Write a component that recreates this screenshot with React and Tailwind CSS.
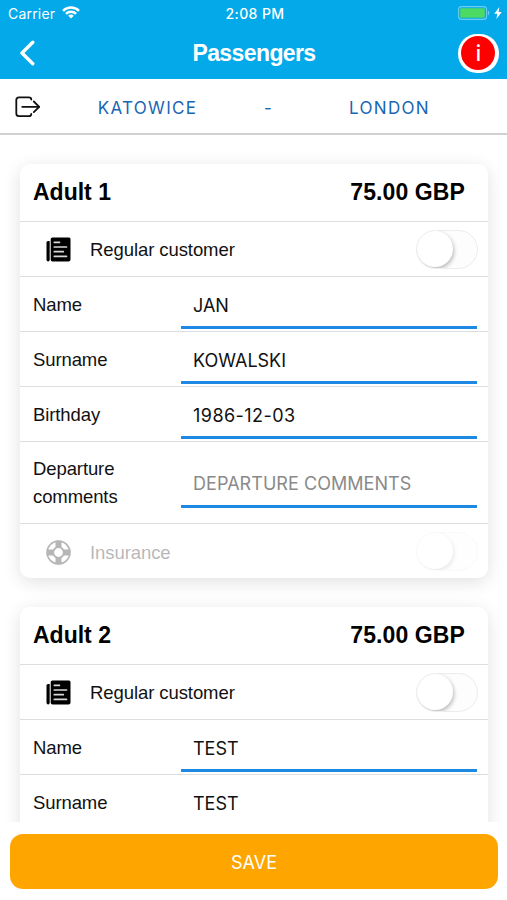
import React from "react";

const passengers = [
    {
        title: "Adult 1",
        price: "75.00 GBP",
        extras: true,
        fields: [
            { label: "Name", value: "JAN" },
            { label: "Surname", value: "KOWALSKI" },
            { label: "Birthday", value: "1986-12-03", date: true }
        ]
    },
    {
        title: "Adult 2",
        price: "75.00 GBP",
        extras: false,
        fields: [
            { label: "Name", value: "TEST" },
            { label: "Surname", value: "TEST" }
        ]
    }
];

const PaperIcon = () => (
    <svg className="w-[25px] h-[25px]" viewBox="0 0 25 25">
        <path d="M6.500 .5h16.500q1.500 0 1.500 1.500v20.500q0 2-2 2H6.500Q4.700 24.500 4.700 22.500V2Q4.700.5 6.500 .5z" fill="#000" />
        <path d="M3.700 4H2Q.5 4 .5 5.600V22.500q0 2 1.700 2 1.500 0 1.500-1.800z" fill="#000" />
        <path d="M8.300 5.300h5.200M8.300 10h12.200M8.300 14.700h9M8.300 19.400h12.200" stroke="#d8d8d8" strokeWidth="1.700" strokeLinecap="round" />
    </svg>
);

const BuoyIcon = () => (
    <svg className="w-[25px] h-[25px]" viewBox="0 0 25 25" fill="none" stroke="#111">
        <circle cx="12.5" cy="12.5" r="11.4" strokeWidth="1.6" />
        <circle cx="12.5" cy="12.5" r="5.3" strokeWidth="1.8" />
        <path d="M12.500 .7v7M12.500 17.300v7M.7 12.500h7M17.300 12.500h7" strokeWidth="6" />
    </svg>
);

const StatusBar = () => (
    <div className="h-[27px] pl-[8px] pr-[5px] grid grid-cols-3 items-center font-['Inter',sans-serif] text-[14px] leading-[27px]">
        <div className="flex items-center gap-[7px]">
            <span className="tracking-[0.2px]">Carrier</span>
            <svg className="w-[18px] h-[13px] -mt-[2px]" viewBox="0 0 18 13" fill="none" stroke="white" strokeWidth="2.4">
                <path d="M1 4.8a11.3 11.3 0 0 1 16 0" />
                <path d="M3.9 7.8a7.2 7.2 0 0 1 10.2 0" />
                <path d="M9 12.6 6.2 9.8a4 4 0 0 1 5.6 0z" fill="white" stroke="none" />
            </svg>
        </div>
        <div className="text-center font-medium text-[14px] whitespace-nowrap tracking-[0.4px]">2:08 PM</div>
        <div className="-mt-[2px] flex items-center justify-end gap-[4px]">
            <svg className="w-[32px] h-[14px]" viewBox="0 0 32 14">
                <rect x="0.6" y="0.6" width="28" height="12.8" rx="3" fill="none" stroke="#6fcdf2" strokeWidth="1.1" />
                <rect x="2.2" y="2.2" width="24.6" height="9.6" rx="1.4" fill="#4cd964" />
                <path d="M30 4.6v4.8c1.8-.8 1.8-4 0-4.8z" fill="#6fcdf2" />
            </svg>
            <svg className="w-[8px] h-[12px]" viewBox="0 0 8 12" fill="white">
                <path d="M5.4 0 .3 6.7h3L2.4 12 7.8 5H4.6z" />
            </svg>
        </div>
    </div>
);

const NavBar = () => (
    <div className="h-[52px] pl-[19px] pr-[8px] flex items-center justify-between">
        <svg className="w-[17px] h-[26px]" viewBox="0 0 17 26" fill="none" stroke="white" strokeWidth="3.4" strokeLinecap="round" strokeLinejoin="round">
            <path d="M13.800 2.300 3 13l10.800 10.700" />
        </svg>
        <div className="text-[23px] font-bold pl-[14px] tracking-[-0.6px]">Passengers</div>
        <div className="w-[41px] h-[39px] rounded-[19px] bg-white flex items-center justify-center">
            <div className="w-[34px] h-[34px] rounded-full bg-[#ff0000] flex items-center justify-center text-[21px] leading-none font-['Inter',sans-serif] font-medium">i</div>
        </div>
    </div>
);

const RouteBar = () => (
    <div className="h-[56px] shrink-0 border-b-2 border-[#d0d0d0] bg-white flex items-center text-[17px] text-[#1a66b3] font-['Inter',sans-serif]">
        <svg className="w-[26px] h-[22px] mt-[2px] ml-[15px] shrink-0" viewBox="0 0 26 22" fill="none" stroke="#111" strokeWidth="1.8" strokeLinecap="round" strokeLinejoin="round">
            <path d="M16.300 3.600C16.300 2 15.300 1.300 13.800 1.300H4C2.200 1.300 1.300 2.200 1.300 4v13.500c0 1.800.9 2.700 2.700 2.700h9.800c1.500 0 2.500-.8 2.500-2.200" />
            <path d="M7.200 10.800h16.800" />
            <path d="m18.800 5.500 5.400 5.300-5.400 5.300" />
        </svg>
        <div className="w-[213px] pt-[5px] text-center tracking-[1.3px]">KATOWICE</div>
        <div className="w-[28px] pt-[5px] text-center">-</div>
        <div className="w-[215px] pt-[5px] text-center tracking-[1.3px]">LONDON</div>
    </div>
);

const Toggle = () => (
    <div className="w-[62px] h-[39px] rounded-full border-[1.5px] border-[#ececec] bg-[#fdfdfd] overflow-hidden">
        <div className="w-[36px] h-[36px] rounded-full bg-white shadow-[1px_2px_4px_rgba(0,0,0,0.28)]"></div>
    </div>
);

const SwitchRow = ({ icon, label, disabled }) => (
    <div className={"h-[55px] pl-[24px] pr-[10px] flex items-center" + (disabled ? " opacity-30" : " border-b-[1.5px] border-[#dedede]")}>
        <div className="w-[28px] pt-[1px] flex justify-center">{icon}</div>
        <div className="flex-1 pt-[2px] pl-[18px] text-[18.5px] tracking-[-0.08px]">{label}</div>
        <Toggle />
    </div>
);

const FieldRow = ({ label, value, date }) => (
    <div className="h-[55px] pl-[13px] pr-[11px] flex border-b-[1.5px] border-[#dedede]">
        <div className="w-[148px] text-[18.5px] leading-[55px] tracking-[-0.1px]">{label}</div>
        <div className={"flex-1 h-[52px] pl-[12px] border-b-[3px] border-[#1e88e5] text-[18px] leading-[57px] font-['Inter',sans-serif]" + (date ? " tracking-[0.45px]" : "")}>{value}</div>
    </div>
);

const DepartureRow = () => (
    <div className="h-[82px] pl-[13px] pr-[11px] flex border-b-[1.5px] border-[#dedede]">
        <div className="w-[148px] pt-[13px] text-[18.5px] leading-[28px] tracking-[-0.1px]">Departure<br />comments</div>
        <div className="flex-1 h-[66px] pl-[12px] pt-[14px] border-b-[3px] border-[#1e88e5] text-[18px] leading-[55px] text-[#8a8a8a] tracking-[0.05px] font-['Inter',sans-serif]">DEPARTURE COMMENTS</div>
    </div>
);

const PassengerCard = ({ passenger }) => (
    <div className="min-h-[414px] bg-white rounded-[10px] shadow-[0_4px_18px_rgba(0,0,0,0.12)]">
        <div className="h-[58px] pl-[13px] pr-[23px] flex items-center justify-between text-[23px] text-black font-bold border-b-[1.5px] border-[#dedede]">
            <div>{passenger.title}</div>
            <div className="tracking-[0.1px]">{passenger.price}</div>
        </div>
        <SwitchRow icon={<PaperIcon />} label="Regular customer" />
        {passenger.fields.map((f) => (
            <FieldRow key={f.label} label={f.label} value={f.value} date={f.date} />
        ))}
        {passenger.extras && <DepartureRow />}
        {passenger.extras && <SwitchRow icon={<BuoyIcon />} label="Insurance" disabled />}
    </div>
);

export default function App() {
    return (
        <div className="w-full h-[900px] flex flex-col overflow-hidden bg-white text-[#111] font-['Liberation_Sans',sans-serif]">
            <div className="h-[79px] shrink-0 bg-[#03a9e9] text-white">
                <StatusBar />
                <NavBar />
            </div>
            <RouteBar />
            <div className="h-[687px] shrink-0 overflow-hidden pt-[29px] pl-[20px] pr-[19px] flex flex-col gap-[29px]">
                {passengers.map((p) => (
                    <PassengerCard key={p.title} passenger={p} />
                ))}
            </div>
            <div className="flex-1 pl-[10px] pt-[12px] pr-[9px]">
                <button className="w-full h-[55px] pt-[2px] rounded-[13px] bg-[#ffa500] text-white text-[18px] font-['Inter',sans-serif]">SAVE</button>
            </div>
        </div>
    );
}
